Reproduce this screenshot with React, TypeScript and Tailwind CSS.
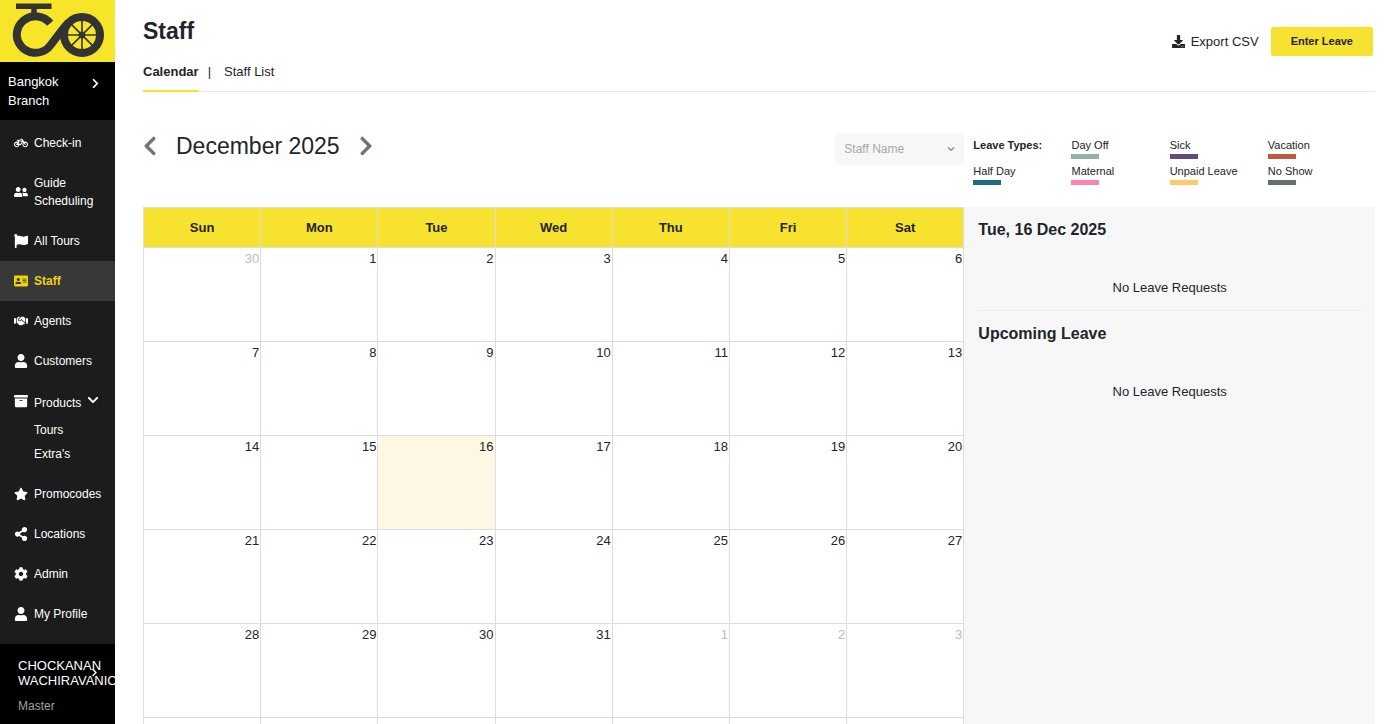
import type { ReactNode } from "react";
import type { IconType } from "react-icons";
import {
  FaAddressCard,
  FaArchive,
  FaBicycle,
  FaChevronDown,
  FaChevronLeft,
  FaChevronRight,
  FaCog,
  FaDownload,
  FaFlag,
  FaHandshake,
  FaShareAlt,
  FaStar,
  FaUser,
  FaUserFriends,
} from "react-icons/fa";
import { clsx } from "clsx";

const DAYS = ["Sun", "Mon", "Tue", "Wed", "Thu", "Fri", "Sat"];

const WEEKS = [
  [30, 1, 2, 3, 4, 5, 6],
  [7, 8, 9, 10, 11, 12, 13],
  [14, 15, 16, 17, 18, 19, 20],
  [21, 22, 23, 24, 25, 26, 27],
  [28, 29, 30, 31, 1, 2, 3],
  [4, 5, 6, 7, 8, 9, 10],
];

const LEAVE_TYPES = [
  { name: "Day Off", color: "bg-[#94b0a9]" },
  { name: "Sick", color: "bg-[#5f4b7d]" },
  { name: "Vacation", color: "bg-[#bf5840]" },
  { name: "Half Day", color: "bg-[#216d7e]" },
  { name: "Maternal", color: "bg-[#fb85ac]" },
  { name: "Unpaid Leave", color: "bg-[#ffcb66]" },
  { name: "No Show", color: "bg-[#666e74]" },
];

function Logo() {
  return (
    <svg viewBox="0 0 115 62" className="block h-[62px] w-full" fill="none" stroke="#333333" role="img" aria-label="Home">
      <path d="M16 6.2H51.5" strokeWidth="5.4" />
      <path d="M34 8V17" strokeWidth="5.5" />
      <path d="M50.2 23.3A18.7 18.2 0 1 0 47.5 48.5C53 43 61 30 69 22" strokeWidth="8" />
      <circle cx="82" cy="35" r="18" strokeWidth="8" />
      <path d="M82 20V50M67 35H97M71.4 24.4L92.6 45.6M92.6 24.4L71.4 45.6" strokeWidth="1.6" />
      <circle cx="82" cy="35" r="3.4" fill="#333333" stroke="none" />
    </svg>
  );
}

function NavItem({ icon: Icon, active, children }: { icon: IconType; active?: boolean; children: ReactNode }) {
  return (
    <a
      href="#"
      className={clsx(
        "flex items-center gap-[6px] py-[11px] pl-[14px] pr-2 leading-[18px]",
        active ? "bg-[#383838] font-bold text-[#ecd40b]" : "text-white"
      )}
    >
      <Icon size={14} className="shrink-0" />
      <span>{children}</span>
    </a>
  );
}

function Sidebar() {
  return (
    <aside className="flex w-[115px] shrink-0 flex-col overflow-hidden bg-[#1c1c1c] text-xs text-white">
      <a href="#" className="block bg-[#f6e528]">
        <Logo />
      </a>
      <button className="flex items-start justify-between bg-black py-[10px] pl-2 pr-[14px] text-left text-[13px] leading-[19px]">
        <span>
          Bangkok
          <br />
          Branch
        </span>
        <FaChevronRight size={11} className="mt-[6px]" />
      </button>
      <nav className="flex flex-1 flex-col pt-[3px] pb-[10px]">
        <NavItem icon={FaBicycle}>Check-in</NavItem>
        <NavItem icon={FaUserFriends}>Guide Scheduling</NavItem>
        <NavItem icon={FaFlag}>All Tours</NavItem>
        <NavItem icon={FaAddressCard} active>Staff</NavItem>
        <NavItem icon={FaHandshake}>Agents</NavItem>
        <NavItem icon={FaUser}>Customers</NavItem>
        <button className="flex items-start gap-[6px] pt-[13px] pb-[6px] pl-[14px] leading-[18px]">
          <FaArchive size={14} />
          <span>Products</span>
          <FaChevronDown size={12} />
        </button>
        <div className="flex flex-col pb-2 pl-[34px] leading-6">
          <a href="#">Tours</a>
          <a href="#">Extra's</a>
        </div>
        <NavItem icon={FaStar}>Promocodes</NavItem>
        <NavItem icon={FaShareAlt}>Locations</NavItem>
        <NavItem icon={FaCog}>Admin</NavItem>
        <NavItem icon={FaUser}>My Profile</NavItem>
      </nav>
      <button className="relative flex h-20 flex-col gap-[6px] bg-black pt-[14px] pl-[18px] text-left">
        <span className="text-[13px] leading-[15px]">CHOCKANAN WACHIRAVANICH</span>
        <span className="leading-6 text-[#a0a0a0]">Master</span>
        <FaChevronRight size={9} className="absolute top-6 right-4" />
      </button>
    </aside>
  );
}

function Calendar() {
  return (
    <table className="w-full table-fixed border-collapse text-[13px]">
      <thead>
        <tr className="h-10 bg-[#f7e22f]">
          {DAYS.map((day) => (
            <th key={day} className="border border-[#dddddd] font-bold">{day}</th>
          ))}
        </tr>
      </thead>
      <tbody>
        {WEEKS.map((week, w) => (
          <tr key={w} className="h-[94px]">
            {week.map((day, d) => {
              const outside = (w === 0 && day > 7) || (w > 3 && day < 15);
              return (
                <td
                  key={d}
                  className={clsx(
                    "border border-[#dddddd] pt-px pr-px text-right align-top leading-5",
                    outside && "text-[#bdbdbd]",
                    w === 2 && d === 2 && "bg-[#fdf7e3]"
                  )}
                >
                  {day}
                </td>
              );
            })}
          </tr>
        ))}
      </tbody>
    </table>
  );
}

function Legend() {
  return (
    <div className="grid grid-cols-4 content-start gap-y-1 px-[9px] pt-1 text-[11px] leading-[17px]">
      <strong>Leave Types:</strong>
      {LEAVE_TYPES.map((type) => (
        <div key={type.name}>
          {type.name}
          <div className={clsx("h-[5px] w-7", type.color)} />
        </div>
      ))}
    </div>
  );
}

export default function App() {
  return (
    <div className="flex h-screen overflow-hidden bg-white font-['Liberation_Sans',Arial,sans-serif] text-[#212529]">
      <Sidebar />
      <main className="flex min-w-0 flex-1 flex-col pr-[25px] pl-7">
        <header className="flex items-start justify-between border-b border-[#e6e6e6]">
          <div>
            <h1 className="mt-4 text-[23px] leading-[30px] font-bold">Staff</h1>
            <div className="-mb-px flex text-[13px] leading-5">
              <a href="#" className="border-b-2 border-[#f7e22f] pt-4 pb-2 font-bold">Calendar</a>
              <span className="px-[9px] pt-4">|</span>
              <a href="#" className="pt-4 pl-1">Staff List</a>
            </div>
          </div>
          <div className="mt-[27px] mr-[2px] flex items-center gap-3">
            <button className="flex items-center gap-[6px] text-[13px]">
              <FaDownload size={13} />
              Export CSV
            </button>
            <button className="h-[29px] rounded-xs bg-[#f7e22f] px-5 text-[11px] font-bold">Enter Leave</button>
          </div>
        </header>

        <section className="mt-[41px] grid grid-cols-[2fr_1fr]">
          <div className="flex h-[74px] items-start justify-between">
            <div className="-ml-1 flex items-center gap-[15px] text-[#6c757d]">
              <button aria-label="Previous month">
                <FaChevronLeft size={22} />
              </button>
              <h2 className="text-[23px] leading-[26px] text-[#212529]">December 2025</h2>
              <button aria-label="Next month">
                <FaChevronRight size={22} />
              </button>
            </div>
            <div className="relative w-[129px]">
              <select aria-label="Staff Name" className="h-8 w-full appearance-none rounded bg-[#f7f7f7] pl-[9px] text-xs text-[#a9a9a9]">
                <option>Staff Name</option>
              </select>
              <FaChevronDown size={8} className="pointer-events-none absolute top-3 right-[9px] text-[#8a8a8a]" />
            </div>
          </div>
          <Legend />
        </section>

        <section className="grid min-h-0 flex-1 grid-cols-[2fr_1fr]">
          <Calendar />
          <aside className="bg-[#f7f7f7] px-[14px] pt-[11px] text-[13px]">
            <div className="h-[93px] border-b border-[#eaeaea]">
              <h3 className="text-base leading-6 font-bold">Tue, 16 Dec 2025</h3>
              <p className="mt-9 text-center leading-5">No Leave Requests</p>
            </div>
            <h3 className="mt-[11px] text-base leading-6 font-bold">Upcoming Leave</h3>
            <p className="mt-9 text-center leading-5">No Leave Requests</p>
          </aside>
        </section>
      </main>
    </div>
  );
}
